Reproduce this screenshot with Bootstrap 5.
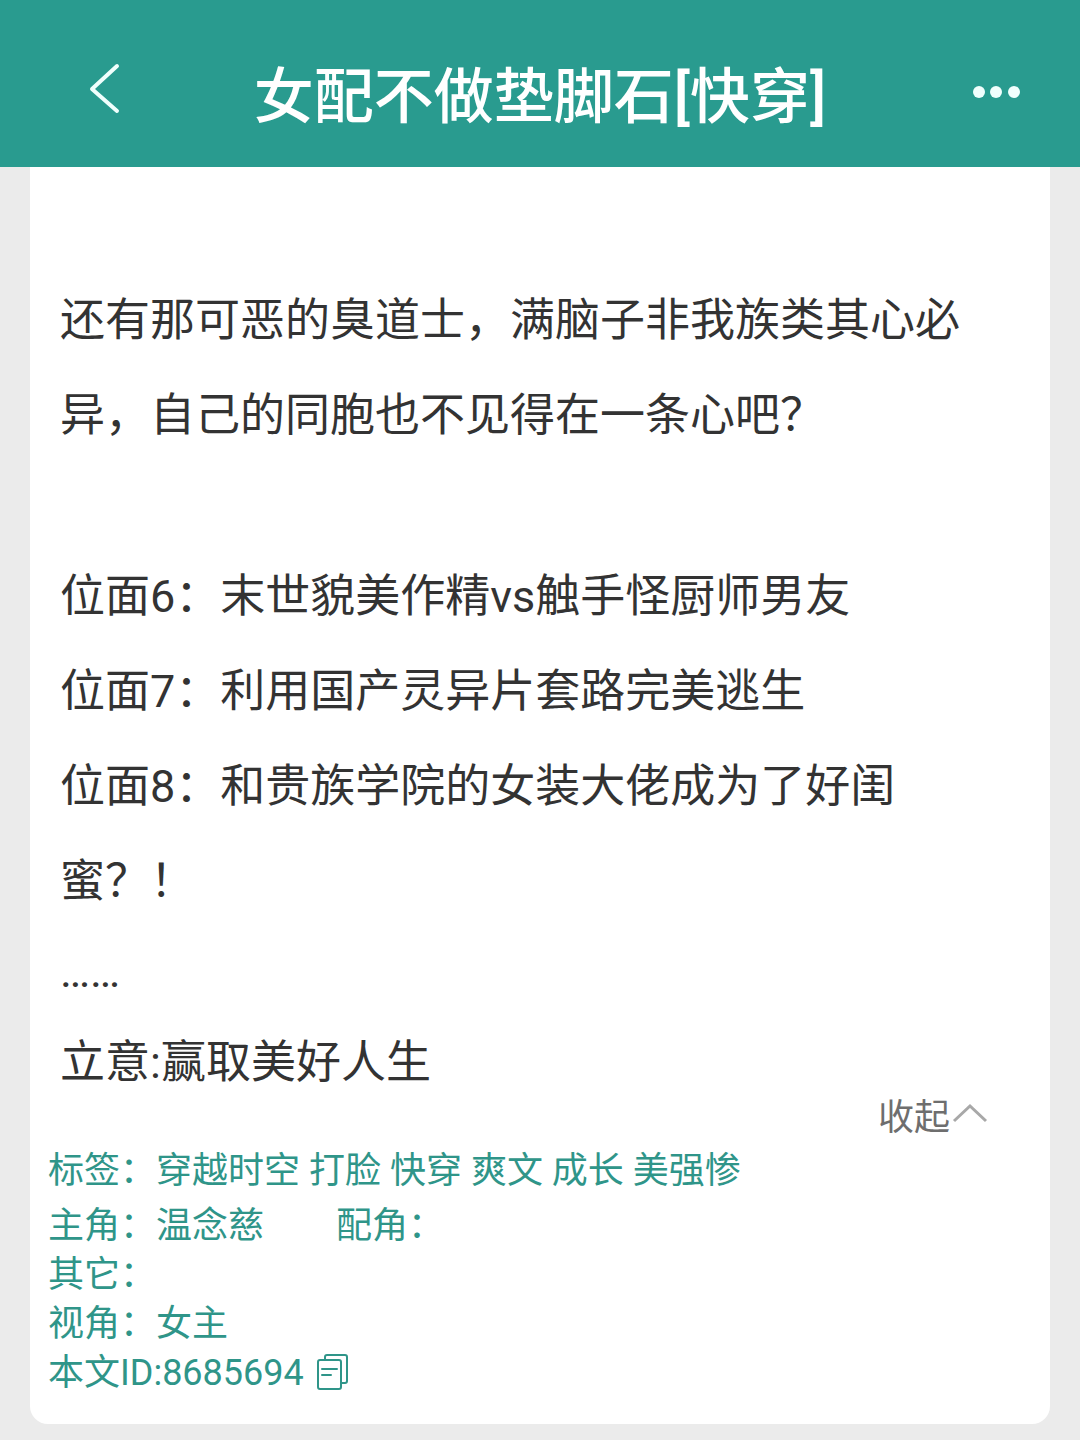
<!DOCTYPE html>
<html lang="zh-CN">
<head>
<meta charset="utf-8">
<meta name="viewport" content="width=device-width, initial-scale=1">
<title>女配不做垫脚石[快穿]</title>
<link href="https://cdn.jsdelivr.net/npm/bootstrap@5.3.0/dist/css/bootstrap.min.css" rel="stylesheet">
<style>
  body { background: #ebebeb; color: #333; font-family: Roboto, "Noto Sans CJK SC", sans-serif; }
  .top-bar { background: #299b8f; color: #fff; height: 167px; padding: 24px 54px 0; }
  .top-bar h1 { font-size: 60px; font-weight: 500; line-height: 80px; padding-top: 4px; }
  .icon-btn { width: 100px; height: 80px; color: #f0fffd; }
  .novel-card { background: #fff; margin: 0 30px 16px; padding: 106px 60px 26px 30px; border-radius: 0 0 18px 18px; }
  .intro p { font-size: 45px; line-height: 95px; }
  .intro .short-line { line-height: 86px; min-height: 86px; }
  .fold-row { margin-top: -14px; margin-bottom: 7px; }
  .fold-btn { font-size: 36px; line-height: 44px; color: #6e6e6e; }
  .meta { color: #2f9589; font-size: 36px; line-height: 49px; margin-left: -12px; }
  .meta .tags { margin-bottom: 6px; }
  .meta a { color: inherit; }
  .role-gap { gap: 72px; }
  .id-row { gap: 13px; }
</style>
</head>
<body>
<header class="top-bar d-flex align-items-center justify-content-between">
  <button type="button" class="icon-btn btn p-0 border-0" aria-label="返回">
    <svg width="100" height="80" viewBox="0 0 100 80" fill="none" stroke="currentColor" stroke-width="4" stroke-linecap="round" stroke-linejoin="round"><path d="M63 10 38 33 63 55"/></svg>
  </button>
  <h1 class="m-0 text-center text-nowrap">女配不做垫脚石[快穿]</h1>
  <button type="button" class="icon-btn btn p-0 border-0" aria-label="更多">
    <svg width="100" height="80" viewBox="0 0 100 80" fill="currentColor"><circle cx="53" cy="36" r="6"/><circle cx="70" cy="36" r="6"/><circle cx="88" cy="36" r="6"/></svg>
  </button>
</header>
<main class="novel-card">
  <section class="intro">
    <p class="m-0">还有那可恶的臭道士，满脑子非我族类其心必异，自己的同胞也不见得在一条心吧？</p>
    <p class="m-0 short-line"></p>
    <p class="m-0">位面6：末世貌美作精vs触手怪厨师男友</p>
    <p class="m-0">位面7：利用国产灵异片套路完美逃生</p>
    <p class="m-0">位面8：和贵族学院的女装大佬成为了好闺蜜？！</p>
    <p class="m-0 short-line">……</p>
    <p class="m-0">立意:赢取美好人生</p>
  </section>
  <div class="fold-row d-flex justify-content-end">
    <button type="button" class="fold-btn btn p-0 border-0 rounded-0 d-flex align-items-center" aria-expanded="true">收起<svg width="40" height="36" viewBox="0 0 40 36" fill="none" stroke="#a8a8a8" stroke-width="3"><path d="M4 21 20 6 36 21"/></svg></button>
  </div>
  <section class="meta">
    <div class="tags">标签：<a class="text-decoration-none" href="#">穿越时空</a> <a class="text-decoration-none" href="#">打脸</a> <a class="text-decoration-none" href="#">快穿</a> <a class="text-decoration-none" href="#">爽文</a> <a class="text-decoration-none" href="#">成长</a> <a class="text-decoration-none" href="#">美强惨</a></div>
    <div class="d-flex role-gap"><span>主角：温念慈</span><span>配角：</span></div>
    <div>其它：</div>
    <div>视角：女主</div>
    <div class="id-row d-flex align-items-center">本文ID:8685694
      <button type="button" class="btn p-0 border-0 d-flex" aria-label="复制">
        <svg width="32" height="40" viewBox="0 0 32 40" fill="none" stroke="#2f9589" stroke-width="2" stroke-linecap="round" stroke-linejoin="round"><path d="M8 5V3Q8 1 10 1H28Q30 1 30 3V27Q30 29 28 29H25"/><rect x="1" y="6" width="23" height="29" rx="2"/><path d="M5 15H20M5 21H14"/></svg>
      </button>
    </div>
  </section>
</main>
<script src="https://cdn.jsdelivr.net/npm/bootstrap@5.3.0/dist/js/bootstrap.bundle.min.js"></script>
</body>
</html>
